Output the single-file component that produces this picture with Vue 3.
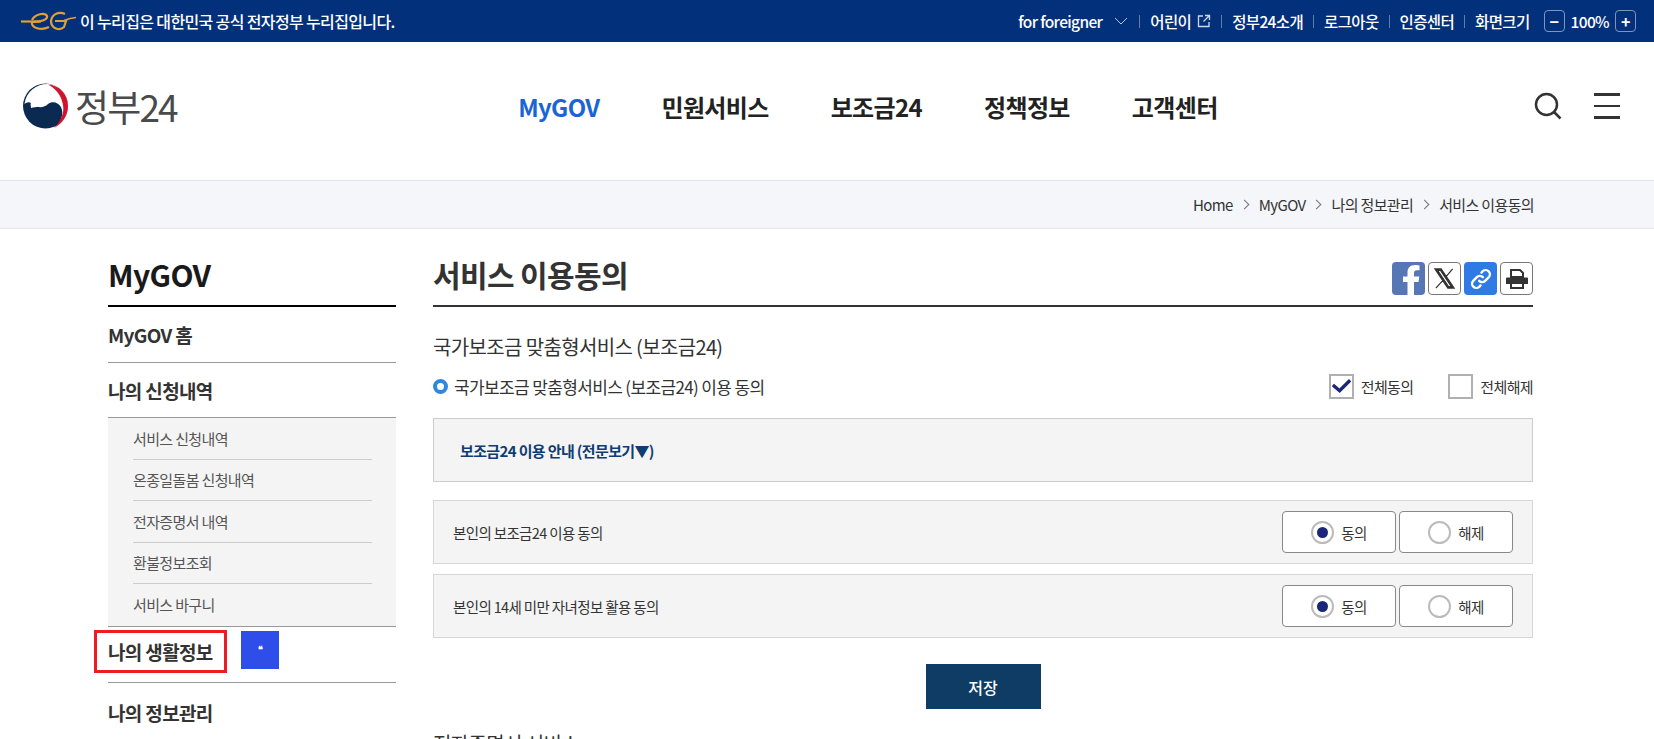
<template>
  <div class="page">
    <div class="top-bar">
      <div class="nuri">
        <svg class="eg-logo" width="55" height="20" viewBox="0 0 55 20">
          <g fill="none" stroke="#e0a035" stroke-width="2.2">
            <path d="M0 10.5H20" />
            <path d="M11 9C14 3 24 1 26 5C27 9 19 11 11 11C10 17 20 20 28 16" />
            <path d="M44 3C38 0 31 3 30 10C30 18 39 20 43 16L45 10H34" />
            <path d="M42 10C46 8 50 7 55 6.500" stroke-width="1.500" />
          </g>
        </svg>
        <span>이 누리집은 대한민국 공식 전자정부 누리집입니다.</span>
      </div>
      <div class="util">
        <span class="foreigner">for foreigner
          <svg width="16" height="9" viewBox="0 0 16 9"><path d="M2 1l6 6 6-6" fill="none" stroke="#b9c6dd" stroke-width="1" /></svg>
        </span>
        <i class="sep"></i>
        <span class="kids">어린이
          <svg width="14" height="14" viewBox="0 0 14 14" fill="none" stroke="#cfd8e8" stroke-width="1.300"><path d="M6 2H1.500V12.500H12V8" /><path d="M8 1.500H12.500V6M12.500 1.500L6.500 7.500" /></svg>
        </span>
        <i class="sep"></i>
        <span>정부24소개</span>
        <i class="sep"></i>
        <span>로그아웃</span>
        <i class="sep"></i>
        <span>인증센터</span>
        <i class="sep"></i>
        <span>화면크기</span>
        <div class="zoom-ctl">
          <b class="zoom-btn">−</b>
          <span>100%</span>
          <b class="zoom-btn">+</b>
        </div>
      </div>
    </div>

    <header class="header">
      <div class="logo">
        <svg width="48" height="46" viewBox="0 0 48 46">
          <circle cx="23.500" cy="23" r="22.500" fill="#0b2a52" />
          <path d="M2.500 21C4 8 15 1 25 1C37 1 46 11 46 23C46 33 40 41 32 45C40 39 42 30 39 24C36 19 30 18 26 21C22 25 16 25 12 22C8 18 5 19 2.500 21Z" fill="#fff" />
          <path d="M9 25C7 15 14 7.500 24 7C33 6.500 40 13 40 21C37 16.500 30 15.500 26 19C22 23 14 24 9 25Z" fill="#fff" />
          <path d="M26 1.500C37 2 46 11 46 23C46 33 40 41 32 45C39 38 42.500 30 41 22C39.500 12 33 5 26 1.500Z" fill="#d2122e" />
        </svg>
        <span class="logo-text">정부24</span>
      </div>
      <nav class="gnb">
        <a v-for="(m, i) in gnb" :key="m" :class="{ on: i === 0 }">{{ m }}</a>
      </nav>
      <div class="tools">
        <svg width="28" height="28" viewBox="0 0 28 28" fill="none" stroke="#333" stroke-width="2.500"><circle cx="12.500" cy="12.500" r="10.500" /><path d="M20 20l6.500 6.500" /></svg>
        <div class="burger"><i></i><i></i><i></i></div>
      </div>
    </header>

    <div class="crumbs">
      <span>Home</span><em></em><span>MyGOV</span><em></em><span>나의 정보관리</span><em></em><span>서비스 이용동의</span>
    </div>

    <div class="body">
      <aside class="side">
        <h2 class="side-title">MyGOV</h2>
        <div class="side-item first">MyGOV 홈</div>
        <div class="side-item">나의 신청내역</div>
        <ul class="sub">
          <li v-for="s in subMenu" :key="s">{{ s }}</li>
        </ul>
        <div class="side-item life">
          <span class="mark">나의 생활정보</span>
          <span class="blue-box"><span>❝</span></span>
        </div>
        <div class="side-item">나의 정보관리</div>
      </aside>

      <main class="main">
        <div class="title-row">
          <h1>서비스 이용동의</h1>
          <div class="share">
            <span class="sh fb"><svg width="33" height="33" viewBox="0 0 33 33"><path d="M22 33V20h4.500l.8-5.500H22v-3.300c0-1.700.8-2.900 3-2.900h2.500V3.500C26.500 3.300 25 3 23 3c-4.500 0-7.500 2.700-7.500 7.500v4H11V20h4.500v13z" fill="#fff" /></svg></span>
            <span class="sh line"><svg width="23" height="23" viewBox="0 0 24 24"><path d="M2 2h6.500L22 22h-6.500zM4.800 3.400l11.500 17.200h2.900L7.700 3.400zM20.500 2L13.200 10.500M10.800 13.500L3 22" fill="#333" stroke="#333" stroke-width="1.300" /></svg></span>
            <span class="sh link"><svg width="22" height="22" viewBox="0 0 24 24" fill="none" stroke="#fff" stroke-width="2.600" stroke-linecap="round"><path d="M10 14a4.500 4.500 0 0 0 6.500 0l4-4a4.600 4.600 0 0 0-6.500-6.500l-1.500 1.500" /><path d="M14 10a4.500 4.500 0 0 0-6.500 0l-4 4a4.600 4.600 0 0 0 6.500 6.500l1.500-1.500" /></svg></span>
            <span class="sh line"><svg width="22" height="20" viewBox="0 0 22 20"><path d="M5 1h9l3 3v4H5z" fill="none" stroke="#333" stroke-width="2" /><path d="M1 8.500h20a1 1 0 0 1 1 1V15h-4v-2H4v2H0V9.500a1 1 0 0 1 1-1z" fill="#333" /><path d="M5 14h12v5H5z" fill="none" stroke="#333" stroke-width="2" /></svg></span>
          </div>
        </div>

        <h3 class="svc-title">국가보조금 맞춤형서비스 (보조금24)</h3>
        <div class="agree-row">
          <div class="bullet-label"><i class="bullet"></i>국가보조금 맞춤형서비스 (보조금24) 이용 동의</div>
          <div class="all-checks">
            <label class="chk">
              <span class="box"><svg width="22" height="16" viewBox="0 0 22 16"><path d="M2 7l7 6L20 2" fill="none" stroke="#1c2678" stroke-width="3.500" /></svg></span>전체동의
            </label>
            <label class="chk"><span class="box"></span>전체해제</label>
          </div>
        </div>

        <div class="notice">보조금24 이용 안내 (전문보기▼)</div>

        <div v-for="row in rows" :key="row" class="consent">
          <span>{{ row }}</span>
          <div class="btns">
            <div class="opt"><i class="radio on"></i>동의</div>
            <div class="opt"><i class="radio"></i>해제</div>
          </div>
        </div>

        <div class="save-wrap"><button class="save" type="button">저장</button></div>
        <h3 class="svc-title next">전자증명서 서비스</h3>
      </main>
    </div>
  </div>
</template>

<script setup>
const gnb = ['MyGOV', '민원서비스', '보조금24', '정책정보', '고객센터']
const subMenu = ['서비스 신청내역', '온종일돌봄 신청내역', '전자증명서 내역', '환불정보조회', '서비스 바구니']
const rows = ['본인의 보조금24 이용 동의', '본인의 14세 미만 자녀정보 활용 동의']
</script>

<style>
html,
body {
  margin: 0;
  background: #fff;
  overflow: hidden;
}
</style>

<style scoped>
.page {
  height: 739px;
  overflow: hidden;
  font-family: 'Noto Sans CJK KR', 'Noto Sans', sans-serif;
  color: #333;
  letter-spacing: -0.04em;
}

/* 상단 바 */
.top-bar {
  height: 42px;
  background: #03307a;
  color: #fff;
  display: flex;
  justify-content: space-between;
  align-items: center;
  padding: 0 18px 0 21px;
  font-size: 15.5px;
  font-weight: 500;
}
.nuri {
  display: flex;
  align-items: center;
  gap: 4px;
  font-size: 16px;
}
.util {
  display: flex;
  align-items: center;
  gap: 10px;
}
.foreigner {
  display: flex;
  align-items: center;
  gap: 11px;
}
.kids {
  display: flex;
  align-items: center;
  gap: 6px;
}
.sep {
  width: 1px;
  height: 13px;
  background: #5f7cab;
}
.zoom-ctl {
  display: flex;
  align-items: center;
  gap: 6px;
  margin-left: 4px;
}
.zoom-btn {
  width: 21px;
  height: 22px;
  box-sizing: border-box;
  border: 1px solid #7f95bb;
  border-radius: 4px;
  display: flex;
  align-items: center;
  justify-content: center;
  font-size: 16px;
  font-weight: 700;
}

/* 헤더 */
.header {
  height: 138px;
  position: relative;
  display: flex;
  align-items: center;
  justify-content: space-between;
  padding: 0 34px 10px 22px;
  box-sizing: border-box;
}
.logo {
  display: flex;
  align-items: center;
  gap: 5px;
}
.logo-text {
  font-size: 37px;
  font-weight: 400;
  color: #4a4a4a;
  letter-spacing: -0.05em;
  line-height: 1;
}
.gnb {
  display: flex;
  gap: 62px;
  font-size: 24px;
  font-weight: 700;
  color: #222;
  margin-left: 25px;
}
.gnb .on {
  color: #1a64d6;
}
.tools {
  display: flex;
  align-items: center;
  gap: 32px;
}
.burger {
  width: 26px;
  display: flex;
  flex-direction: column;
  gap: 9px;
}
.burger i {
  height: 2.500px;
  background: #333;
}

/* 경로 */
.crumbs {
  height: 49px;
  box-sizing: border-box;
  background: #f4f6fa;
  border-top: 1px solid #e3e5ea;
  border-bottom: 1px solid #e3e5ea;
  display: flex;
  justify-content: flex-end;
  align-items: center;
  gap: 8px;
  padding-right: 120px;
  font-size: 15px;
}
.crumbs em {
  width: 6px;
  height: 6px;
  border-top: 1px solid #77707c;
  border-right: 1px solid #77707c;
  transform: rotate(45deg);
  margin: 0 3px 0 0;
}

.body {
  display: flex;
  gap: 37px;
  padding: 0 121px 0 108px;
}

/* 사이드 */
.side {
  width: 288px;
  flex: none;
}
.side-title {
  margin: 0;
  height: 78px;
  box-sizing: border-box;
  padding-top: 24px;
  font-size: 30px;
  line-height: 42px;
  font-weight: 700;
  color: #1a1a1a;
  border-bottom: 2px solid #000;
}
.side-item {
  height: 55px;
  box-sizing: border-box;
  display: flex;
  align-items: center;
  font-size: 19px;
  font-weight: 700;
  color: #333;
  border-bottom: 1px solid #999;
}
.side-item.first {
  height: 56px;
}
.sub {
  list-style: none;
  margin: 0;
  padding: 0 24px 0 25px;
  background: #f4f4f4;
  border-bottom: 1px solid #999;
}
.sub li {
  height: 41.500px;
  box-sizing: border-box;
  display: flex;
  align-items: center;
  font-size: 15px;
  color: #555;
  border-bottom: 1px solid #ccc;
}
.sub li:last-child {
  border-bottom: 0;
}
.life {
  height: 56px;
  position: relative;
  gap: 28px;
}
.mark {
  outline: 3px solid #ed1c24;
  outline-offset: -3px;
  padding: 9px 14px 9px 14px;
  margin-left: -14px;
  margin-top: -5px;
  line-height: 25px;
}
.blue-box {
  width: 38px;
  height: 38px;
  margin-left: -14px;
  margin-top: -9px;
  background: #2f4de8;
  color: #fff;
  font-size: 9px;
  display: flex;
  align-items: center;
  justify-content: center;
}
.side-item:last-child {
  border-bottom: 0;
  height: 60px;
}

/* 본문 */
.main {
  flex: 1;
  min-width: 0;
}
.title-row {
  height: 78px;
  box-sizing: border-box;
  display: flex;
  justify-content: space-between;
  align-items: flex-start;
  padding-top: 24px;
  border-bottom: 2px solid #333;
}
.title-row h1 {
  margin: 0;
  font-size: 30px;
  line-height: 42px;
  font-weight: 700;
  color: #333;
}
.share {
  display: flex;
  gap: 3px;
  margin-top: 9px;
}
.sh {
  width: 33px;
  height: 33px;
  box-sizing: border-box;
  border-radius: 4px;
  display: flex;
  align-items: center;
  justify-content: center;
  overflow: hidden;
}
.sh.fb {
  background: #5676b5;
}
.sh.line {
  border: 1px solid #777;
  background: #fff;
}
.sh.link {
  background: #2f7be5;
}
.svc-title {
  margin: 24px 0 0;
  font-size: 20px;
  line-height: 32px;
  font-weight: 400;
  color: #333;
}
.agree-row {
  display: flex;
  justify-content: space-between;
  align-items: center;
  height: 28px;
  margin-top: 9px;
}
.bullet-label {
  display: flex;
  align-items: center;
  font-size: 17px;
  gap: 6px;
}
.bullet {
  width: 15px;
  height: 15px;
  box-sizing: border-box;
  border: 4px solid #2f88e0;
  border-radius: 50%;
  background: #fff;
}
.all-checks {
  display: flex;
  gap: 35px;
}
.chk {
  display: flex;
  align-items: center;
  gap: 7px;
  font-size: 15px;
}
.box {
  width: 25px;
  height: 25px;
  box-sizing: border-box;
  border: 2px solid #b0b0b0;
  background: #fff;
  display: flex;
  align-items: center;
  justify-content: center;
}
.notice {
  height: 64px;
  margin-top: 18px;
  box-sizing: border-box;
  border: 1px solid #ccc;
  background: #f4f4f4;
  padding-left: 26px;
  display: flex;
  align-items: center;
  font-size: 15px;
  font-weight: 700;
  color: #0f3c73;
}
.consent {
  height: 64px;
  margin-top: 10px;
  box-sizing: border-box;
  border: 1px solid #d6d6d6;
  background: #f4f4f4;
  padding: 0 19px 0 19px;
  display: flex;
  justify-content: space-between;
  align-items: center;
  font-size: 14.500px;
}
.notice + .consent {
  margin-top: 18px;
}
.btns {
  display: flex;
  gap: 3px;
}
.opt {
  width: 114px;
  height: 42px;
  box-sizing: border-box;
  border: 1px solid #888;
  border-radius: 4px;
  background: #fff;
  display: flex;
  align-items: center;
  justify-content: center;
  gap: 7px;
  font-size: 14.500px;
}
.radio {
  width: 23px;
  height: 23px;
  box-sizing: border-box;
  border: 2px solid #bbb;
  border-radius: 50%;
  background: #fff;
  position: relative;
}
.radio.on::after {
  content: '';
  position: absolute;
  left: 4px;
  top: 4px;
  width: 11px;
  height: 11px;
  border-radius: 50%;
  background: #1c2678;
}
.save-wrap {
  display: flex;
  justify-content: center;
  margin-top: 26px;
}
.save {
  width: 115px;
  height: 45px;
  border: 0;
  background: #0f3c64;
  color: #fff;
  font: inherit;
  font-size: 16px;
  font-weight: 500;
}
.svc-title.next {
  margin-top: 19px;
}
</style>
